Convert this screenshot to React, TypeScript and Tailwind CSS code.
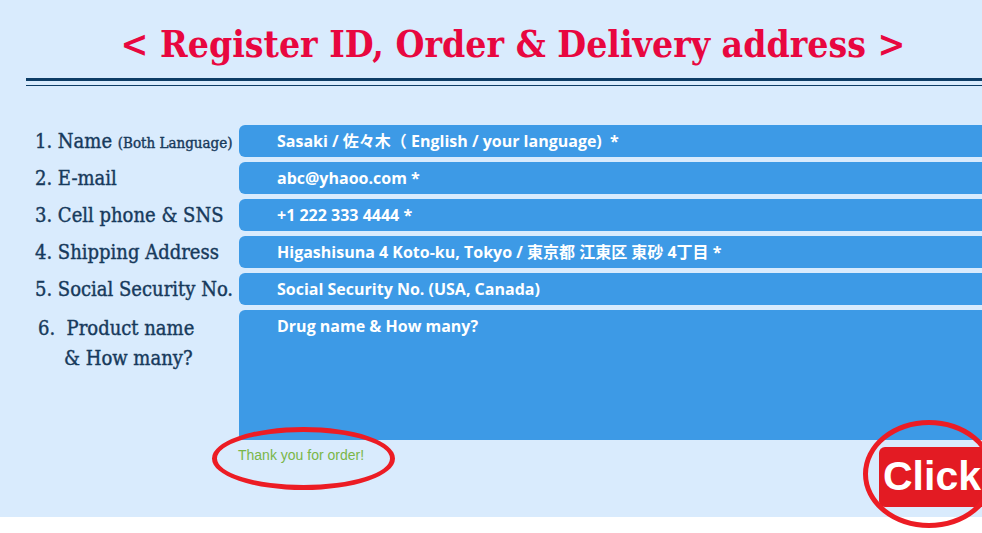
import React from 'react';

const labelFont = { fontFamily: '"DejaVu Serif", serif' };

const fields = [
  { label: <>1. Name <span className="text-[15px]">(Both Language)</span></>, value: 'Sasaki / 佐々木（ English / your language)  *' },
  { label: <>2. E-mail</>, value: 'abc@yhaoo.com *' },
  { label: <>3. Cell phone &amp; SNS</>, value: '+1 222 333 4444 *' },
  { label: <>4. Shipping Address</>, value: 'Higashisuna 4 Koto-ku, Tokyo / 東京都 江東区 東砂 4丁目 *' },
  { label: <>5. Social Security No.</>, value: 'Social Security No. (USA, Canada)' },
];

export default function App() {
  return (
    <div className="w-[982px] h-[533px] overflow-hidden bg-white">
      <div className="h-[517px] bg-[#d9ebfd] pl-[26px] pt-[20px]">
        <h1
          className="text-[#e8073f] text-[37px] font-bold font-stretch-condensed leading-[48px] text-center w-[974px]"
          style={{ fontFamily: '"DejaVu Serif", serif' }}
        >
          &lt; Register ID, Order &amp; Delivery address &gt;
        </h1>
        <div className="mt-[10px] h-[3px] bg-[#0d3d66]" />
        <div className="mt-[4px] h-px bg-[#0d3d66]" />

        <div className="mt-[39px] flex flex-col gap-[5px]">
          {fields.map((f, i) => (
            <div key={i} className="flex items-center">
              <div
                className="w-[213px] shrink-0 pl-[9px] text-[20px] font-stretch-condensed text-[#173a5c] whitespace-nowrap [-webkit-text-stroke:0.4px_#173a5c]"
                style={labelFont}
              >
                {f.label}
              </div>
              <div
                className="flex-1 h-[32px] bg-[#3d9ae6] rounded-l-[6px] pl-[38px] flex items-center text-white font-bold text-[16px] whitespace-pre"
                style={{ fontFamily: '"Open Sans", "Noto Sans CJK JP", sans-serif' }}
              >
                {f.value}
              </div>
            </div>
          ))}
          <div className="flex">
            <div
              className="w-[213px] shrink-0 pl-[12px] pt-[3px] text-[20px] font-stretch-condensed text-[#173a5c] leading-[30px] [-webkit-text-stroke:0.4px_#173a5c]"
              style={labelFont}
            >
              <div>6.&nbsp; Product name</div>
              <div className="pl-[26px]">&amp; How many?</div>
            </div>
            <div
              className="flex-1 h-[130px] bg-[#3d9ae6] rounded-tl-[6px] pl-[38px] pt-[4px] text-white font-bold text-[16px]"
              style={{ fontFamily: '"Open Sans", sans-serif' }}
            >
              Drug name &amp; How many?
            </div>
          </div>
        </div>

        <div className="flex items-start">
          <div className="shrink-0 ml-[186px] mt-[-13px] w-[183px] h-[63px] rounded-[50%] border-[5px] border-[#ec1c24] flex items-center pl-[21px] pb-[6px]">
            <span className="text-[#7ab648] text-[14px]" style={{ fontFamily: '"Liberation Sans", Arial, sans-serif' }}>
              Thank you for order!
            </span>
          </div>
          <div className="shrink-0 ml-[468px] mt-[-20px] relative w-[132px] h-[108px]">
            <div
              className="absolute left-[16px] top-[27px] w-[200px] h-[60px] bg-[#e31b23] rounded-[6px] pl-[4px] flex items-center text-white font-bold text-[41px]"
              style={{ fontFamily: '"Liberation Sans", Arial, sans-serif' }}
            >
              Click
            </div>
            <div className="absolute inset-0 rounded-[50%] border-[5px] border-[#ec1c24]" />
          </div>
        </div>
      </div>
    </div>
  );
}
